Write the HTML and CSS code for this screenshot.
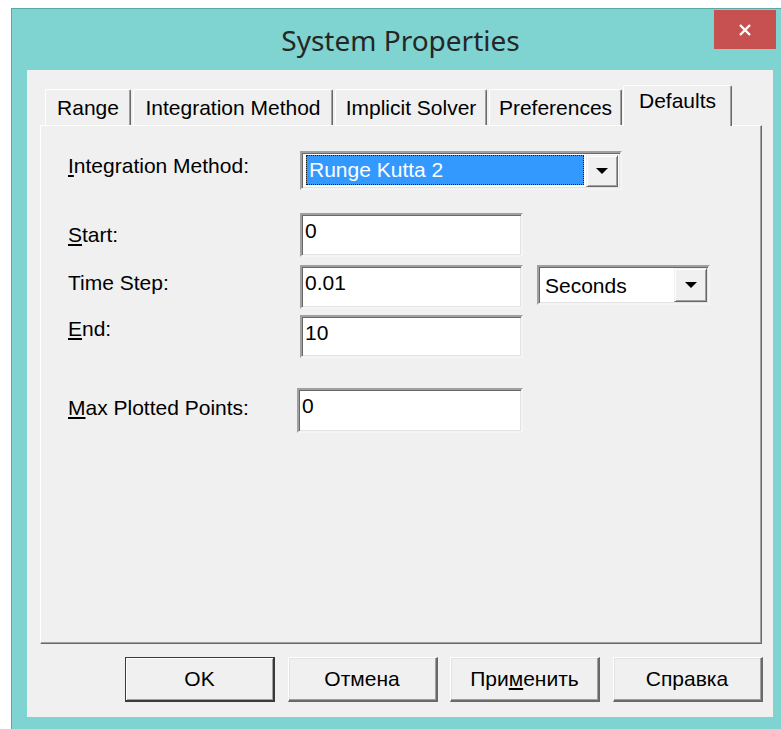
FILE: index.html
```html
<!DOCTYPE html>
<html lang="en">
<head>
<meta charset="utf-8">
<title>System Properties</title>
<link rel="stylesheet" href="styles.css">
</head>
<body>
<div class="window">
  <div class="titlebar">
    <div class="title">System Properties</div>
    <button class="close" type="button" aria-label="Close">
      <svg width="14" height="14" viewBox="0 0 14 14"><path d="M2 2L12 12M12 2L2 12" stroke="#fff" stroke-width="2.4" fill="none"/></svg>
    </button>
  </div>
  <div class="client">
    <div class="tabs">
      <div class="tab tab-range">Range</div>
      <div class="tab tab-method">Integration Method</div>
      <div class="tab tab-solver">Implicit Solver</div>
      <div class="tab tab-prefs">Preferences</div>
      <div class="tab tab-defaults active">Defaults</div>
    </div>
    <div class="panel">
      <div class="row row-method">
        <label class="label"><u>I</u>ntegration Method:</label>
        <div class="combo combo-method">
          <div class="combo-value selected">Runge Kutta 2</div>
          <div class="combo-btn"><span class="arrow"></span></div>
        </div>
      </div>
      <div class="row row-start">
        <label class="label"><u>S</u>tart:</label>
        <div class="edit">0</div>
      </div>
      <div class="row row-step">
        <label class="label">Time Step:</label>
        <div class="edit">0.01</div>
        <div class="combo combo-units">
          <div class="combo-value">Seconds</div>
          <div class="combo-btn"><span class="arrow"></span></div>
        </div>
      </div>
      <div class="row row-end">
        <label class="label"><u>E</u>nd:</label>
        <div class="edit">10</div>
      </div>
      <div class="row row-max">
        <label class="label"><u>M</u>ax Plotted Points:</label>
        <div class="edit edit-max">0</div>
      </div>
    </div>
    <div class="buttons">
      <button class="btn default" type="button">OK</button>
      <button class="btn" type="button">Отмена</button>
      <button class="btn" type="button">При<u>м</u>енить</button>
      <button class="btn" type="button">Справка</button>
    </div>
  </div>
</div>
</body>
</html>
```

FILE: styles.css
```css
* {
  box-sizing: border-box;
}

html, body {
  margin: 0;
  padding: 0;
  width: 781px;
  height: 729px;
  overflow: hidden;
  background: #ffffff;
}

body {
  font-family: "Liberation Sans", Arial, sans-serif;
  font-size: 21px;
  color: #000;
}

/* Window frame */
.window {
  margin: 8px 0 0 11px;
  width: 778px;
  height: 740px;
  background: #7fd3d0;
  border-top: 1px solid #5aa9a6;
  border-left: 1px solid #5aa9a6;
}

.titlebar {
  height: 61px;
  display: grid;
  grid-template-columns: 75px 1fr 75px;
  align-items: center;
}

.title {
  grid-column: 2;
  text-align: center;
  font-family: "Noto Sans", "Open Sans", sans-serif;
  font-size: 28px;
  color: #262626;
  line-height: 34px;
  padding-top: 1px;
}

.close {
  grid-column: 3;
  align-self: start;
  margin-top: 1px;
  width: 62px;
  height: 39px;
  border: 0;
  padding: 0;
  background: #c75050;
  display: flex;
  align-items: center;
  justify-content: center;
}

.client {
  margin-left: 15px;
  width: 746px;
  height: 647px;
  background: #f0f0f0;
}

/* Tab strip */
.tabs {
  height: 55px;
  padding: 15px 0 0 18px;
  display: flex;
  align-items: flex-end;
}

.tab {
  height: 36px;
  padding-top: 6px;
  line-height: 24px;
  text-align: center;
  white-space: nowrap;
  background: #f0f0f0;
  border-top: 1px solid #ffffff;
  border-left: 1px solid #ffffff;
  border-right: 1px solid #696969;
  box-shadow: inset -1px 0 0 #a0a0a0;
  border-radius: 2px 2px 0 0;
  margin-right: 2px;
}

.tab-range { width: 86px; }
.tab-method { width: 200px; }
.tab-solver { width: 152px; }
.tab-prefs { width: 133px; margin-right: 1px; }

.tab.active {
  width: 109px;
  height: 41px;
  padding-top: 3px;
  margin-bottom: -1px;
  position: relative;
  z-index: 1;
}

/* Page area */
.panel {
  margin-left: 13px;
  width: 722px;
  height: 519px;
  padding: 25px 0 0 27px;
  border-top: 1px solid #ffffff;
  border-left: 1px solid #ffffff;
  border-right: 1px solid #696969;
  border-bottom: 1px solid #696969;
  box-shadow: inset -1px -1px 0 #a0a0a0;
}

.row {
  display: flex;
  align-items: flex-start;
}

.label {
  flex: none;
  width: 232px;
  line-height: 24px;
  white-space: nowrap;
}

.row-method { height: 39px; }
.row-method .label { margin-top: 3px; }

.row-start { margin-top: 23px; }
.row-start .label { margin-top: 10px; }

.row-step { margin-top: 8px; }
.row-step .label { margin-top: 6px; }

.row-end { margin-top: 6px; }
.row-end .label { margin-top: 2px; }
.row-end .edit { height: 43px; }

.row-max { margin-top: 30px; }
.row-max .label { margin-top: 8px; }

/* Sunken edit box */
.edit {
  width: 223px;
  height: 44px;
  padding: 4px 3px 0 3px;
  line-height: 24px;
  background: #ffffff;
  border: 2px solid;
  border-color: #a0a0a0 #f4f4f4 #f4f4f4 #a0a0a0;
  box-shadow: inset 1px 1px 0 #696969, inset -1px -1px 0 #e3e3e3;
}

.edit-max {
  width: 226px;
  height: 45px;
  margin-left: -3px;
}

/* Drop-down combo boxes */
.combo {
  display: flex;
  align-items: flex-start;
  background: #ffffff;
  border: 2px solid;
  border-color: #a0a0a0 #f4f4f4 #f4f4f4 #a0a0a0;
  box-shadow: inset 1px 1px 0 #696969, inset -1px -1px 0 #e3e3e3;
}

.combo-method {
  width: 322px;
  height: 39px;
  padding: 2px 2px 0 4px;
}

.combo-method .combo-value {
  width: 278px;
  height: 30px;
  margin-right: 2px;
}

.combo-value {
  line-height: 24px;
  padding: 2px 0 0 2px;
  white-space: nowrap;
}

.combo-value.selected {
  background: #3399ff;
  color: #ffffff;
  border: 1px dotted #1b1b1b;
}

.combo-btn {
  flex: none;
  width: 32px;
  height: 32px;
  background: #f0f0f0;
  border-top: 1px solid #f0f0f0;
  border-left: 1px solid #f0f0f0;
  border-right: 1px solid #696969;
  border-bottom: 1px solid #696969;
  box-shadow: inset 1px 1px 0 #ffffff, inset -1px -1px 0 #a0a0a0;
  display: flex;
  align-items: center;
  justify-content: center;
}

.arrow {
  width: 0;
  height: 0;
  border-left: 6px solid transparent;
  border-right: 6px solid transparent;
  border-top: 6px solid #000000;
}

.combo-units {
  margin-left: 14px;
  width: 173px;
  height: 40px;
  padding: 1px 1px 0 0;
  justify-content: space-between;
}

.combo-units .combo-value {
  padding: 6px 0 0 6px;
}

.combo-units .combo-btn {
  width: 33px;
  height: 34px;
}

/* Dialog buttons */
.buttons {
  margin-top: 13px;
  padding-left: 98px;
  display: flex;
  gap: 12.5px;
}

.btn {
  width: 150px;
  height: 45px;
  padding: 0;
  font-family: "Liberation Sans", Arial, sans-serif;
  font-size: 21px;
  color: #000;
  background: #f0f0f0;
  border-top: 1px solid #ffffff;
  border-left: 1px solid #ffffff;
  border-right: 2px solid #696969;
  border-bottom: 2px solid #696969;
  box-shadow: inset -1px -1px 0 #a0a0a0, inset 1px 1px 0 #e3e3e3;
}

.btn.default {
  border: 1px solid #3a3a3a;
  border-right-width: 2px;
  border-bottom-width: 2px;
  box-shadow: inset 1px 1px 0 #ffffff, inset -1px -1px 0 #a0a0a0;
}
```
